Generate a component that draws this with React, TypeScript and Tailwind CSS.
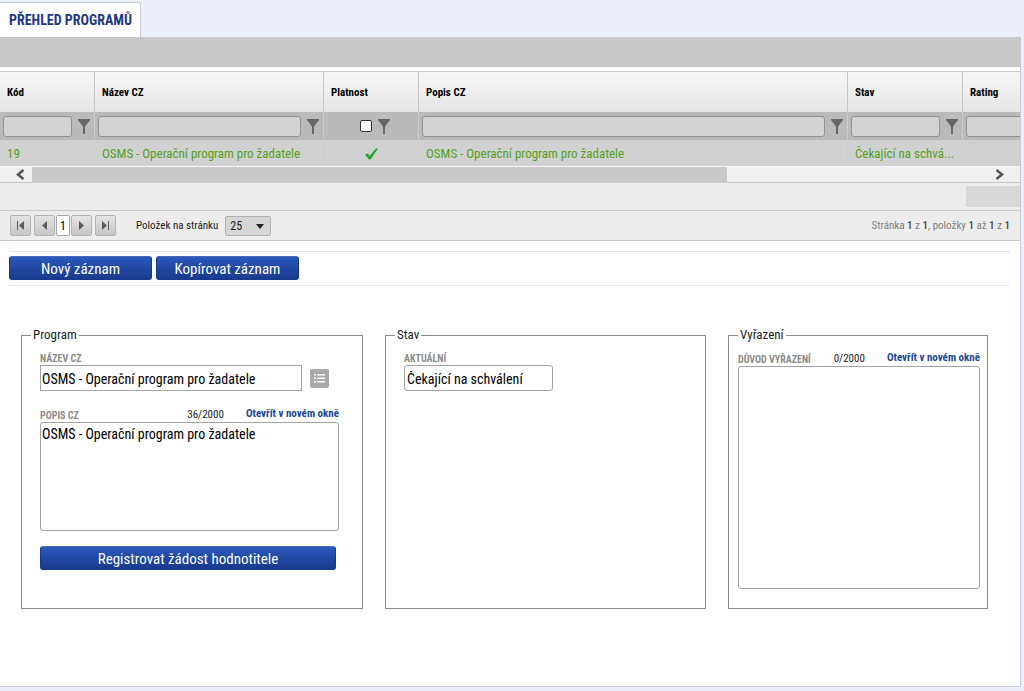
import React, { useState } from "react";

const fieldClass =
  "border border-[#a3a3a3] bg-white text-[14px] leading-[18px] text-black outline-none";
const captionClass = "pt-[2px] text-[10px] leading-[12px] font-bold text-[#8b8b8b]";
const blueButton =
  "h-6 rounded-[3px] border border-[#163a8c] border-t-[#4a69b5] bg-linear-to-b from-[#2a59bd] to-[#183a8b] pt-px text-[15px] leading-[20px] text-white";
const pagerButton =
  "flex h-[21px] w-[21px] items-center justify-center rounded-[2px] border border-[#b4b4b4] bg-linear-to-b from-[#e4e4e4] to-[#c6c6c6]";

function Funnel() {
  return (
    <svg width="12" height="15" viewBox="0 0 12 15" fill="#666" aria-hidden="true">
      <path d="M0 0h12v1L7 7.500V15H5V7.500L0 1z" />
    </svg>
  );
}

function FilterButton({ label }: { label: string }) {
  return (
    <button type="button" aria-label={label} className="shrink-0">
      <Funnel />
    </button>
  );
}

function FilterCell({ name }: { name: string }) {
  return (
    <td className="h-7 border-r border-[#cdcdcd] p-0">
      <div className="flex items-center gap-[6px] pr-1 pl-[3px]">
        <input
          type="text"
          aria-label={`Filtr ${name}`}
          className="h-[21px] min-w-0 flex-1 rounded-[3px] border border-[#929292] bg-[#d3d3d3] px-1 text-[13px] outline-none"
        />
        <FilterButton label={`Filtrovat ${name}`} />
      </div>
    </td>
  );
}

function PagerIcon({ kind }: { kind: "first" | "prev" | "next" | "last" }) {
  const flip = kind === "next" || kind === "last";
  const bar = kind === "first" || kind === "last";
  return (
    <svg
      width="9"
      height="9"
      viewBox="0 0 9 9"
      fill="#5c5c5c"
      className={flip ? "rotate-180" : ""}
      aria-hidden="true"
    >
      {bar && <path d="M1 0h1v9H1z" />}
      <path d={bar ? "M8 0v9L3 4.5z" : "M7 0v9L2 4.5z"} />
    </svg>
  );
}

function Header({ children }: { children: React.ReactNode }) {
  return (
    <th
      scope="col"
      className="h-10 border-r border-[#c6c6c6] p-0 pt-[2px] pl-[7px] text-left text-[11px] leading-4 font-bold text-black"
    >
      {children}
    </th>
  );
}

function Cell({ children }: { children?: React.ReactNode }) {
  return (
    <td className="h-[26px] border-r border-[#cdcdcd] p-0 pt-px pl-[7px] text-[13px] leading-5 whitespace-nowrap text-[#53a01b]">
      {children}
    </td>
  );
}

function Grid() {
  return (
    <div className="overflow-hidden border-t border-[#c9c9c9]">
      <table className="w-[1192px] table-fixed border-separate border-spacing-0">
        <colgroup>
          <col className="w-[95px]" />
          <col className="w-[229px]" />
          <col className="w-[95px]" />
          <col className="w-[429px]" />
          <col className="w-[115px]" />
          <col className="w-[229px]" />
        </colgroup>
        <thead>
          <tr className="bg-linear-to-b from-[#f7f7f7] to-[#e6e6e6]">
            <Header>Kód</Header>
            <Header>Název CZ</Header>
            <Header>Platnost</Header>
            <Header>Popis CZ</Header>
            <Header>Stav</Header>
            <Header>Rating</Header>
          </tr>
          <tr className="bg-[#bababa]">
            <FilterCell name="Kód" />
            <FilterCell name="Název CZ" />
            <td className="h-7 border-r border-[#cdcdcd] p-0">
              <div className="flex items-center justify-center gap-[6px] pl-[7px]">
                <input
                  type="checkbox"
                  aria-label="Filtr Platnost"
                  className="h-3 w-3 appearance-none rounded-[2px] border border-[#333] bg-white"
                />
                <FilterButton label="Filtrovat Platnost" />
              </div>
            </td>
            <FilterCell name="Popis CZ" />
            <FilterCell name="Stav" />
            <FilterCell name="Rating" />
          </tr>
        </thead>
        <tbody>
          <tr className="bg-[#d1d1d1]">
            <Cell>19</Cell>
            <Cell>OSMS - Operační program pro žadatele</Cell>
            <Cell>
              <div className="flex justify-center pr-[6px]">
                <svg width="13" height="12" viewBox="0 0 13 12" role="img" aria-label="Ano">
                  <path d="M0 6.500l3-1 1.500 2.500L11 .5h2L5.500 11.500H4z" fill="#22a52b" />
                </svg>
              </div>
            </Cell>
            <Cell>OSMS - Operační program pro žadatele</Cell>
            <Cell>Čekající na schvá...</Cell>
            <Cell />
          </tr>
        </tbody>
      </table>
    </div>
  );
}

function ScrollBar() {
  return (
    <div className="flex h-[17px] items-center border-t border-b border-t-[#f7f7f7] border-b-[#c9c9c9] bg-[#f0f0f0]">
      <button type="button" aria-label="Posunout vlevo" className="flex w-8 justify-end pr-[7px]">
        <svg width="9" height="11" viewBox="0 0 9 11" fill="none" stroke="#555" strokeWidth="2.500">
          <path d="M7.500 1L2 5.500 7.500 10" />
        </svg>
      </button>
      <div className="h-full flex-1">
        <div className="h-full w-[73%] bg-[#c9c9c9]" />
      </div>
      <button type="button" aria-label="Posunout vpravo" className="flex w-9 justify-start pl-[11px]">
        <svg width="9" height="11" viewBox="0 0 9 11" fill="none" stroke="#555" strokeWidth="2.500">
          <path d="M1.500 1L7 5.500 1.500 10" />
        </svg>
      </button>
    </div>
  );
}

function Pager() {
  return (
    <div className="flex h-[30px] items-center border-b border-[#c9c9c9] bg-[#ededed] px-[10px] text-[11px] leading-4">
      <nav aria-label="Stránkování" className="flex items-center">
        <button type="button" aria-label="První stránka" className={pagerButton}>
          <PagerIcon kind="first" />
        </button>
        <button type="button" aria-label="Předchozí stránka" className={`${pagerButton} ml-[3px]`}>
          <PagerIcon kind="prev" />
        </button>
        <a
          href="#1"
          aria-current="page"
          className="mx-px flex h-[21px] w-[14px] items-center justify-center rounded-[2px] border border-[#a8a8a8] bg-white text-[12px] text-black"
        >
          1
        </a>
        <button type="button" aria-label="Další stránka" className={pagerButton}>
          <PagerIcon kind="next" />
        </button>
        <button type="button" aria-label="Poslední stránka" className={`${pagerButton} ml-[3px]`}>
          <PagerIcon kind="last" />
        </button>
      </nav>
      <label htmlFor="page-size" className="ml-5 text-[#222]">
        Položek na stránku
      </label>
      <div className="relative ml-[7px]">
        <select
          id="page-size"
          defaultValue="25"
          className="block h-5 w-[46px] appearance-none rounded-[2px] border border-[#b0b0b0] bg-[#d6d6d6] pl-1 text-[12px] text-[#222]"
        >
          <option>10</option>
          <option>25</option>
          <option>50</option>
        </select>
        <svg
          width="8"
          height="5"
          viewBox="0 0 8 5"
          className="pointer-events-none absolute top-2 right-[7px]"
          aria-hidden="true"
        >
          <path d="M0 0h8L4 5z" fill="#222" />
        </svg>
      </div>
      <p className="ml-auto text-[#7d7d7d]">
        Stránka <b className="font-medium text-[#444]">1</b> z{" "}
        <b className="font-medium text-[#444]">1</b>, položky{" "}
        <b className="font-medium text-[#444]">1</b> až <b className="font-medium text-[#444]">1</b> z{" "}
        <b className="font-medium text-[#444]">1</b>
      </p>
    </div>
  );
}

function Panel({ title, children }: { title: string; children: React.ReactNode }) {
  return (
    <fieldset className="h-[282px] min-w-0 border border-[#8a8a8a]">
      <legend className="ml-[9px] px-[2px] text-[13px] leading-4 text-[#222]">{title}</legend>
      {children}
    </fieldset>
  );
}

function TextHeader({ id, label, count }: { id: string; label: string; count: string }) {
  return (
    <div className="flex items-end text-[11px] leading-[14px] whitespace-nowrap">
      <label htmlFor={id} className={captionClass}>
        {label}
      </label>
      <span className="ml-auto text-[#222]">{count}</span>
      <a href="#okno" className="ml-[22px] pb-px font-bold text-[#22488f]">
        Otevřít v novém okně
      </a>
    </div>
  );
}

export default function App() {
  const [name, setName] = useState("OSMS - Operační program pro žadatele");
  const [description, setDescription] = useState("OSMS - Operační program pro žadatele");
  const [reason, setReason] = useState("");

  return (
    <div className="flex min-h-screen flex-col bg-[#ebeffb] pr-[3px] pb-1 font-['Roboto_Condensed','Liberation_Sans_Narrow',Roboto,sans-serif]">
      <div className="flex h-[37px] items-end">
        <h1 className="flex h-[35px] w-[141px] items-center rounded-tr-[3px] border-t border-r border-[#c9ccd6] bg-white pl-[9px] text-[14px] leading-5 font-bold whitespace-nowrap text-[#23397f]">
          PŘEHLED PROGRAMŮ
        </h1>
      </div>
      <main className="flex-1 border-r border-b border-[#c5cbd8] bg-white">
        <div className="mb-1 h-[30px] bg-[#c9c9c9]" />
        <Grid />
        <ScrollBar />
        <div className="flex h-7 items-center justify-end border-b border-[#c9c9c9] bg-[#ededed]">
          <div className="h-[21px] w-[54px] bg-[#d8d8d8]" />
        </div>
        <Pager />

        <div className="mt-[10px] mr-[10px] ml-[9px] flex gap-1 border-t border-b border-[#e4e4e4] pt-1 pb-[5px]">
          <button type="button" className={`${blueButton} w-[143px]`}>
            Nový záznam
          </button>
          <button type="button" className={`${blueButton} w-[143px]`}>
            Kopírovat záznam
          </button>
        </div>

        <form
          className="mt-[41px] grid grid-cols-[342fr_321fr_260fr] gap-[22px] pr-8 pl-[21px]"
          onSubmit={(event) => event.preventDefault()}
        >
          <Panel title="Program">
            <div className="pt-2 pr-[23px] pl-[18px]">
              <label htmlFor="name" className={`${captionClass} block`}>
                NÁZEV CZ
              </label>
              <div className="flex items-center gap-2">
                <input
                  id="name"
                  type="text"
                  value={name}
                  onChange={(event) => setName(event.target.value)}
                  className={`${fieldClass} h-[26px] min-w-0 flex-1 px-px pt-px`}
                />
                <button
                  type="button"
                  aria-label="Vybrat ze seznamu"
                  className="mr-[10px] flex h-[19px] w-[19px] shrink-0 items-center justify-center rounded-[2px] bg-[#a9a9a9]"
                >
                  <svg width="11" height="9" viewBox="0 0 11 9" fill="#fff" aria-hidden="true">
                    <path d="M0 0h2v1.500H0zM3 0h8v1.500H3zM0 3.500h2V5H0zM3 3.500h8V5H3zM0 7h2v1.500H0zM3 7h8v1.500H3z" />
                  </svg>
                </button>
              </div>
              <div className="mt-4">
                <TextHeader id="description" label="POPIS CZ" count={`${description.length}/2000`} />
              </div>
              <textarea
                id="description"
                value={description}
                onChange={(event) => setDescription(event.target.value)}
                className={`${fieldClass} block h-[109px] w-full resize-none rounded-[3px] px-px py-[2px]`}
              />
              <button type="submit" className={`${blueButton} mt-[15px] block w-[296px]`}>
                Registrovat žádost hodnotitele
              </button>
            </div>
          </Panel>

          <Panel title="Stav">
            <div className="pt-2 pl-[18px]">
              <label htmlFor="state" className={`${captionClass} block`}>
                AKTUÁLNÍ
              </label>
              <input
                id="state"
                type="text"
                readOnly
                value="Čekající na schválení"
                className={`${fieldClass} block h-[26px] w-[149px] rounded-[3px] px-[2px] pt-px`}
              />
            </div>
          </Panel>

          <Panel title="Vyřazení">
            <div className="pt-2 pr-[7px] pl-[9px]">
              <TextHeader id="reason" label="DŮVOD VYŘAZENÍ" count={`${reason.length}/2000`} />
              <textarea
                id="reason"
                value={reason}
                onChange={(event) => setReason(event.target.value)}
                className={`${fieldClass} block h-[223px] w-full resize-none rounded-[3px] px-px py-[2px]`}
              />
            </div>
          </Panel>
        </form>
      </main>
    </div>
  );
}
